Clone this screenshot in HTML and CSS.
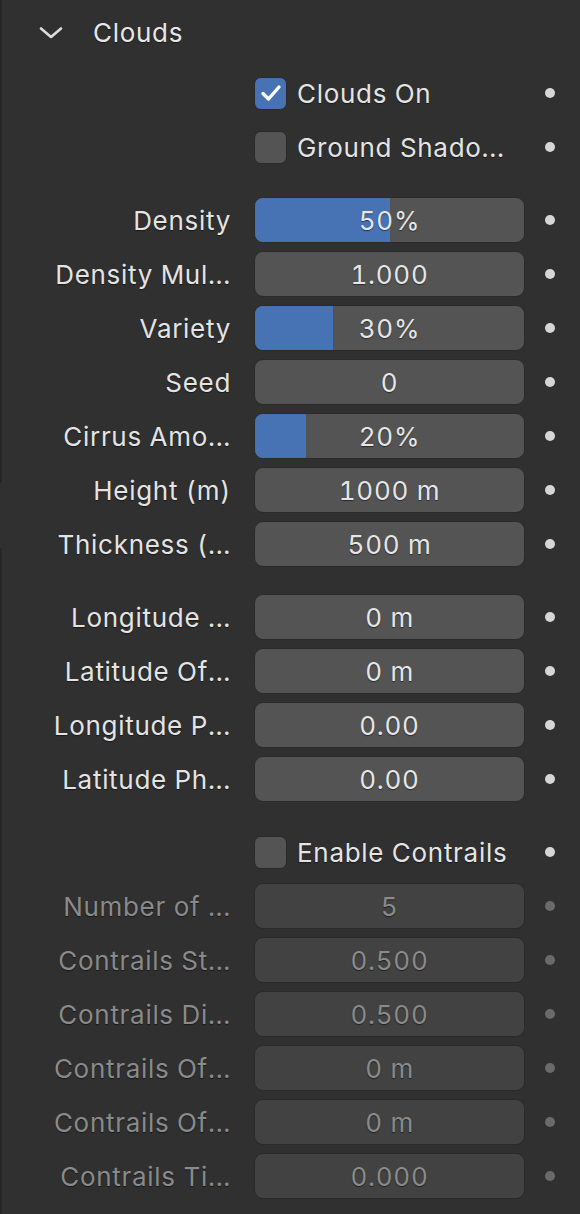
FILE: index.html
```html
<!DOCTYPE html>
<html>
<head>
<meta charset="utf-8">
<link rel="stylesheet" href="styles.css">
</head>
<body>
<div class="frame">
  <div class="rail">
    <div class="rail-top"></div>
    <div class="rail-gap"></div>
    <div class="rail-bottom"></div>
  </div>
  <div class="panel">
    <div class="header">
      <svg class="chevron" width="24" height="12" viewBox="0 0 24 12"><path d="M2 1.5 L12 10 L22 1.5" fill="none" stroke="#dcdcdc" stroke-width="2.6" stroke-linecap="round" stroke-linejoin="round"/></svg>
      <span class="title">Clouds</span>
    </div>

    <div class="group first">
      <div class="row">
        <div class="label"></div>
        <div class="check-wrap">
          <span class="box checked"><svg width="22" height="18" viewBox="0 0 22 18"><path d="M3 9.5 L8.5 15 L19 3" fill="none" stroke="#ffffff" stroke-width="3.4" stroke-linecap="round" stroke-linejoin="round"/></svg></span>
          <span class="check-text">Clouds On</span>
        </div>
        <div class="dot-col"><span class="dot"></span></div>
      </div>
      <div class="row">
        <div class="label"></div>
        <div class="check-wrap">
          <span class="box"></span>
          <span class="check-text">Ground Shado...</span>
        </div>
        <div class="dot-col"><span class="dot"></span></div>
      </div>
    </div>

    <div class="group">
      <div class="row"><div class="label">Density</div><div class="field"><div class="fill" style="width:50%"></div><span class="val">50%</span></div><div class="dot-col"><span class="dot"></span></div></div>
      <div class="row"><div class="label">Density Mul...</div><div class="field"><span class="val">1.000</span></div><div class="dot-col"><span class="dot"></span></div></div>
      <div class="row"><div class="label">Variety</div><div class="field"><div class="fill" style="width:29%"></div><span class="val">30%</span></div><div class="dot-col"><span class="dot"></span></div></div>
      <div class="row"><div class="label">Seed</div><div class="field"><span class="val">0</span></div><div class="dot-col"><span class="dot"></span></div></div>
      <div class="row"><div class="label">Cirrus Amo...</div><div class="field"><div class="fill" style="width:19%"></div><span class="val">20%</span></div><div class="dot-col"><span class="dot"></span></div></div>
      <div class="row"><div class="label">Height (m)</div><div class="field"><span class="val">1000 m</span></div><div class="dot-col"><span class="dot"></span></div></div>
      <div class="row"><div class="label">Thickness (...</div><div class="field"><span class="val">500 m</span></div><div class="dot-col"><span class="dot"></span></div></div>
    </div>

    <div class="group">
      <div class="row"><div class="label">Longitude ...</div><div class="field"><span class="val">0 m</span></div><div class="dot-col"><span class="dot"></span></div></div>
      <div class="row"><div class="label">Latitude Of...</div><div class="field"><span class="val">0 m</span></div><div class="dot-col"><span class="dot"></span></div></div>
      <div class="row"><div class="label">Longitude P...</div><div class="field"><span class="val">0.00</span></div><div class="dot-col"><span class="dot"></span></div></div>
      <div class="row"><div class="label">Latitude Ph...</div><div class="field"><span class="val">0.00</span></div><div class="dot-col"><span class="dot"></span></div></div>
    </div>

    <div class="group">
      <div class="row">
        <div class="label"></div>
        <div class="check-wrap">
          <span class="box"></span>
          <span class="check-text">Enable Contrails</span>
        </div>
        <div class="dot-col"><span class="dot"></span></div>
      </div>
      <div class="row disabled"><div class="label">Number of ...</div><div class="field"><span class="val">5</span></div><div class="dot-col"><span class="dot"></span></div></div>
      <div class="row disabled"><div class="label">Contrails St...</div><div class="field"><span class="val">0.500</span></div><div class="dot-col"><span class="dot"></span></div></div>
      <div class="row disabled"><div class="label">Contrails Di...</div><div class="field"><span class="val">0.500</span></div><div class="dot-col"><span class="dot"></span></div></div>
      <div class="row disabled"><div class="label">Contrails Of...</div><div class="field"><span class="val">0 m</span></div><div class="dot-col"><span class="dot"></span></div></div>
      <div class="row disabled"><div class="label">Contrails Of...</div><div class="field"><span class="val">0 m</span></div><div class="dot-col"><span class="dot"></span></div></div>
      <div class="row disabled"><div class="label">Contrails Ti...</div><div class="field"><span class="val">0.000</span></div><div class="dot-col"><span class="dot"></span></div></div>
    </div>
  </div>
</div>
</body>
</html>
```
FILE: styles.css
```css
html, body {
  margin: 0;
  padding: 0;
  background: #303030;
  width: 580px;
  height: 1214px;
  overflow: hidden;
}
body {
  font-family: Inter, "Noto Sans", sans-serif;
  font-size: 26px;
  letter-spacing: 0.7px;
  font-variant-numeric: tabular-nums;
  color: #e4e4e4;
}
.frame {
  display: flex;
  height: 1214px;
}
.rail {
  width: 2px;
  display: flex;
  flex-direction: column;
  flex: none;
}
.rail-top { height: 483px; background: #262626; }
.rail-gap { height: 65px; background: #303030; }
.rail-bottom { flex: 1; background: #262626; }
.panel {
  flex: 1;
  display: flex;
  flex-direction: column;
}
.header {
  height: 65px;
  display: flex;
  align-items: center;
  padding-left: 37px;
}
.chevron { flex: none; }
.title {
  margin-left: 30px;
  color: #e8e8e8;
  text-shadow: 0 1px 1px rgba(0,0,0,0.5);
}
.group {
  display: flex;
  flex-direction: column;
  gap: 8px;
  margin-top: 27px;
}
.group.first { margin-top: 5px; }
.row {
  display: flex;
  align-items: center;
  height: 46px;
}
.label {
  width: 229px;
  flex: none;
  text-align: right;
  white-space: nowrap;
  color: #e4e4e4;
  text-shadow: 0 1px 1px rgba(0,0,0,0.5);
}
.field {
  margin-left: 23px;
  width: 271px;
  height: 46px;
  box-sizing: border-box;
  flex: none;
  position: relative;
  background: #545454;
  border: 1px solid #2a2a2a;
  border-radius: 9px;
  overflow: hidden;
  display: flex;
  align-items: center;
  justify-content: center;
}
.fill {
  position: absolute;
  left: 0;
  top: 0;
  bottom: 0;
  background: #4772b3;
}
.val {
  position: relative;
  color: #e6e6e6;
  text-shadow: 0 1px 1px rgba(0,0,0,0.5);
}
.check-wrap {
  margin-left: 23px;
  width: 271px;
  flex: none;
  display: flex;
  align-items: center;
}
.box {
  width: 33px;
  height: 33px;
  box-sizing: border-box;
  border-radius: 7px;
  background: #545454;
  border: 1px solid #2a2a2a;
  display: flex;
  align-items: center;
  justify-content: center;
  flex: none;
}
.box.checked { background: #4772b3; }
.check-text {
  margin-left: 10px;
  white-space: nowrap;
  color: #e4e4e4;
  text-shadow: 0 1px 1px rgba(0,0,0,0.5);
}
.dot-col {
  width: 50px;
  flex: none;
  display: flex;
  justify-content: center;
}
.dot {
  width: 10px;
  height: 10px;
  border-radius: 50%;
  background: #d6d6d6;
}
.row.disabled .label { color: #8a8a8a; }
.row.disabled .field { background: #424242; }
.row.disabled .val { color: #8a8a8a; }
.row.disabled .dot { background: #6a6a6a; }
```
